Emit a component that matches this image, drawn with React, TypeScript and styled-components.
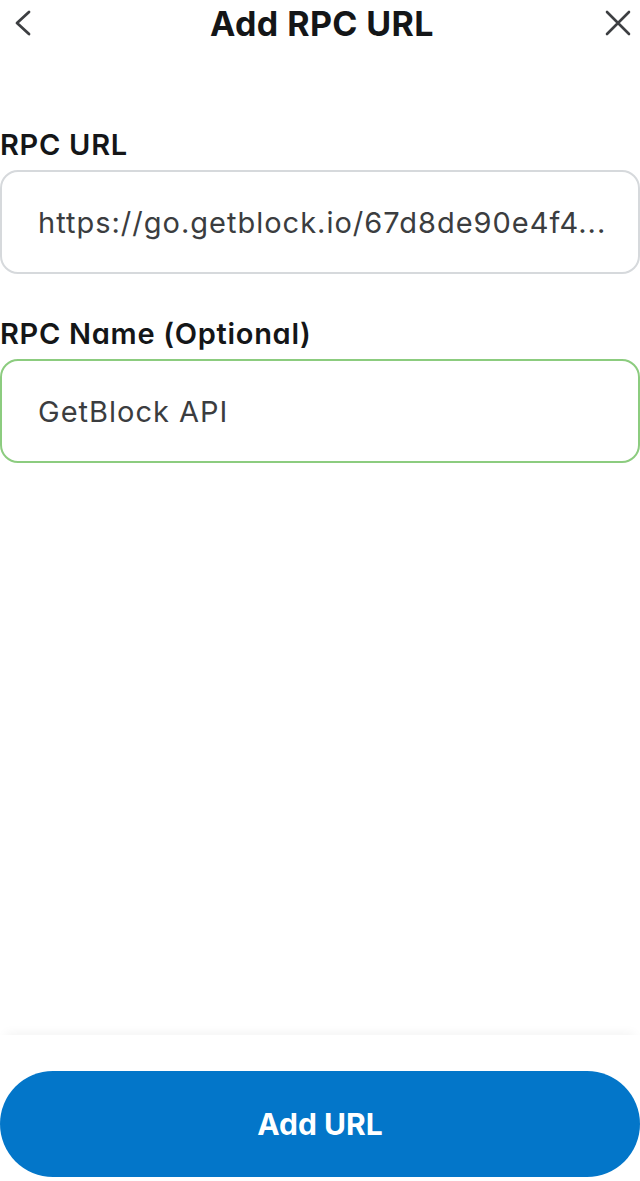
import React from "react";
import styled, { createGlobalStyle } from "styled-components";

const Global = createGlobalStyle`
  html, body { margin: 0; padding: 0; background: #ffffff; }
  body {
    font-family: Inter, "Noto Sans", sans-serif;
    font-feature-settings: "cv11";
    color: #141618;
  }
  * { box-sizing: border-box; }
`;

const Page = styled.div`
  width: 640px;
  height: 1181px;
  display: flex;
  flex-direction: column;
  background: #ffffff;
  overflow: hidden;
`;

const Header = styled.header`
  height: 46px;
  display: grid;
  grid-template-columns: 48px 1fr 48px;
  align-items: center;
  padding: 0 8px 0 12px;
`;

const IconButton = styled.button<{ $align?: "start" | "end" }>`
  border: 0;
  background: none;
  padding: 0;
  display: flex;
  justify-content: ${(p) => (p.$align === "end" ? "flex-end" : "flex-start")};
  align-items: center;
  color: #3d3f42;
`;

const Title = styled.h1`
  margin: 0;
  text-align: center;
  font-size: 34px;
  font-weight: 700;
  letter-spacing: 0.4px;
  color: #141618;
`;

const Form = styled.main`
  flex: 1;
  display: flex;
  flex-direction: column;
  padding-top: 83px;
`;

const Field = styled.div`
  display: flex;
  flex-direction: column;
  gap: 9px;
  margin-bottom: 44px;
`;

const Label = styled.label`
  font-size: 29px;
  font-weight: 600;
  color: #141618;
  line-height: 32px;
  letter-spacing: 0.7px;
`;

const Input = styled.div<{ $focused?: boolean }>`
  height: 104px;
  display: flex;
  align-items: center;
  padding: 0 36px;
  border-radius: 18px;
  border: 2px solid ${(p) => (p.$focused ? "#8ccc7f" : "#d6d9dc")};
  font-size: 29px;
  color: #3b3d40;
  white-space: nowrap;
  overflow: hidden;
  letter-spacing: 1px;
`;

const Footer = styled.footer`
  padding: 36px 0 4px;
  box-shadow: 0 -8px 10px -6px rgba(0, 0, 0, 0.05);
`;

const PrimaryButton = styled.button`
  width: 100%;
  height: 106px;
  border: 0;
  border-radius: 53px;
  background: #0376c9;
  color: #ffffff;
  font-family: Inter, "Noto Sans", sans-serif;
  font-feature-settings: "cv11";
  font-size: 30px;
  font-weight: 700;
  letter-spacing: 0px;
`;

export default function App() {
  return (
    <Page>
      <Global />
      <Header>
        <IconButton aria-label="Back">
          <svg width="24" height="30" viewBox="0 0 24 30" fill="none">
            <path d="M17 4 L5 15 L17 26" stroke="#3d3f42" strokeWidth="2.8" strokeLinecap="round" strokeLinejoin="round" />
          </svg>
        </IconButton>
        <Title>Add RPC URL</Title>
        <IconButton $align="end" aria-label="Close">
          <svg width="28" height="28" viewBox="0 0 28 28" fill="none">
            <path d="M3 3 L25 25 M25 3 L3 25" stroke="#3d3f42" strokeWidth="2.6" strokeLinecap="round" />
          </svg>
        </IconButton>
      </Header>
      <Form>
        <Field>
          <Label>RPC URL</Label>
          <Input>https://go.getblock.io/67d8de90e4f4...</Input>
        </Field>
        <Field>
          <Label>RPC Name (Optional)</Label>
          <Input $focused>GetBlock API</Input>
        </Field>
      </Form>
      <Footer>
        <PrimaryButton>Add URL</PrimaryButton>
      </Footer>
    </Page>
  );
}
